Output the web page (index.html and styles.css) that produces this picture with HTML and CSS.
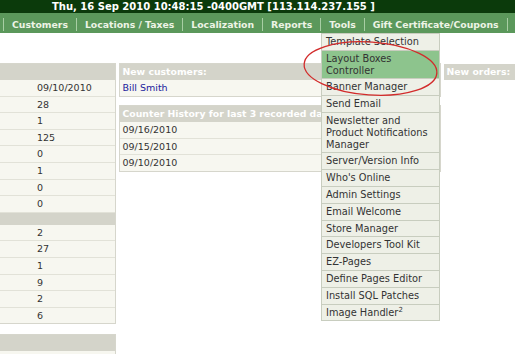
FILE: index.html
```html
<!DOCTYPE html>
<html>
<head>
<meta charset="utf-8">
<title>Admin</title>
<link rel="stylesheet" href="styles.css">
</head>
<body>
<div class="topbar">Thu, 16 Sep 2010 10:48:15 -0400GMT [113.114.237.155 ]</div>
<nav class="nav">
  <span class="nav-sep"></span><span class="nav-item">Customers</span>
  <span class="nav-sep"></span><span class="nav-item">Locations / Taxes</span>
  <span class="nav-sep"></span><span class="nav-item">Localization</span>
  <span class="nav-sep"></span><span class="nav-item">Reports</span>
  <span class="nav-sep"></span><span class="nav-item">Tools</span>
  <span class="nav-sep"></span><span class="nav-item">Gift Certificate/Coupons</span>
  <span class="nav-sep"></span>
</nav>

<div class="content">
  <div class="col-left">
    <div class="box box-left">
      <div class="box-head"></div>
      <div class="row">09/10/2010</div>
      <div class="row">28</div>
      <div class="row">1</div>
      <div class="row">125</div>
      <div class="row">0</div>
      <div class="row">1</div>
      <div class="row">0</div>
      <div class="row">0</div>
      <div class="box-sub"></div>
      <div class="row">2</div>
      <div class="row">27</div>
      <div class="row">1</div>
      <div class="row">9</div>
      <div class="row">2</div>
      <div class="row row-last">6</div>
    </div>
    <div class="box box-left box-gap">
      <div class="box-head"></div>
      <div class="row"></div>
    </div>
  </div>

  <div class="col-mid">
    <div class="box">
      <div class="box-head">New customers:</div>
      <div class="row row-last row-mid"><a class="link">Bill Smith</a></div>
    </div>
    <div class="box box-gap-sm">
      <div class="box-head">Counter History for last 3 recorded days</div>
      <div class="row row-mid">09/16/2010</div>
      <div class="row row-mid">09/15/2010</div>
      <div class="row row-mid row-last">09/10/2010</div>
    </div>
  </div>

  <div class="col-right">
    <div class="box-head box-head-plain">New orders:</div>
  </div>
</div>

<ul class="menu">
  <li class="menu-item">Template Selection</li>
  <li class="menu-item is-active">Layout Boxes Controller</li>
  <li class="menu-item">Banner Manager</li>
  <li class="menu-item">Send Email</li>
  <li class="menu-item">Newsletter and Product Notifications Manager</li>
  <li class="menu-item">Server/Version Info</li>
  <li class="menu-item">Who's Online</li>
  <li class="menu-item">Admin Settings</li>
  <li class="menu-item">Email Welcome</li>
  <li class="menu-item">Store Manager</li>
  <li class="menu-item">Developers Tool Kit</li>
  <li class="menu-item">EZ-Pages</li>
  <li class="menu-item">Define Pages Editor</li>
  <li class="menu-item">Install SQL Patches</li>
  <li class="menu-item">Image Handler<sup class="sup">2</sup></li>
</ul>

<svg class="annot" width="515" height="354" viewBox="0 0 515 354">
  <ellipse cx="370.5" cy="68.5" rx="66.5" ry="26.5" transform="rotate(4 370.5 68.5)" fill="none" stroke="#d22b2b" stroke-width="1.3"/>
</svg>
</body>
</html>
```
FILE: styles.css
```css
* { box-sizing: border-box; }

html, body {
  margin: 0;
  padding: 0;
  background: #ffffff;
  overflow: hidden;
}

body {
  position: relative;
  width: 515px;
  height: 354px;
  font-family: "DejaVu Sans", Verdana, sans-serif;
  color: #333333;
}

.topbar {
  height: 13px;
  background: #0b3a0b;
  color: #ffffff;
  font-weight: bold;
  font-size: 10px;
  line-height: 13px;
  padding-left: 52px;
  white-space: nowrap;
}

.nav {
  height: 20px;
  background: #5b985b;
  display: flex;
  align-items: center;
  padding-left: 3px;
  font-weight: bold;
  font-size: 9.3px;
  color: #eef4e6;
  white-space: nowrap;
}

.nav-sep {
  flex: none;
  width: 1px;
  height: 13px;
  margin-top: 2px;
  background: #a8cea4;
}

.nav-item {
  padding: 2px 8px 0;
}

.content {
  display: flex;
  align-items: flex-start;
  padding-top: 30px;
}

.col-left {
  flex: none;
  width: 116px;
}

.col-mid {
  flex: none;
  width: 322px;
  margin-left: 3px;
}

.col-right {
  flex: 1;
  margin-left: 3px;
}

.box {
  background: #f7f7f0;
  border: 1px solid #d6d6cc;
}

.box-left {
  border-left: 0;
}

.box-gap {
  margin-top: 10px;
}

.box-gap-sm {
  margin-top: 8.5px;
}

.box-head {
  height: 16px;
  background: #d4d4ca;
  color: #ffffff;
  font-weight: bold;
  font-size: 9.3px;
  line-height: 16px;
  padding-left: 2.5px;
  white-space: nowrap;
  overflow: hidden;
}

.box-head-plain {
  margin-top: 1px;
}

.box-sub {
  height: 12px;
  background: #d4d4ca;
}

.row {
  height: 16.6px;
  border-bottom: 1px solid #e2e2d8;
  padding-left: 37px;
  font-size: 9.5px;
  line-height: 15.6px;
  white-space: nowrap;
}

.row-mid {
  padding-left: 2.5px;
}

.row-last {
  border-bottom: 0;
  height: 15.6px;
}

.link {
  color: #22229c;
  text-decoration: none;
}

.menu {
  position: absolute;
  top: 33px;
  left: 321px;
  width: 119px;
  margin: 0;
  padding: 0;
  list-style: none;
  font-size: 9.8px;
  line-height: 11.8px;
  color: #333333;
  z-index: 2;
}

.menu-item {
  background: #eef0e7;
  border: 1px solid #c8cdbf;
  border-top: 0;
  padding: 2px 3px 2px 4px;
}

.menu-item:first-child {
  border-top: 1px solid #c8cdbf;
}

.menu-item.is-active {
  background: #8dc48d;
}

.sup {
  font-size: 7px;
  line-height: 0;
  vertical-align: 4px;
}

.annot {
  position: absolute;
  top: 0;
  left: 0;
  z-index: 3;
  pointer-events: none;
}
```
